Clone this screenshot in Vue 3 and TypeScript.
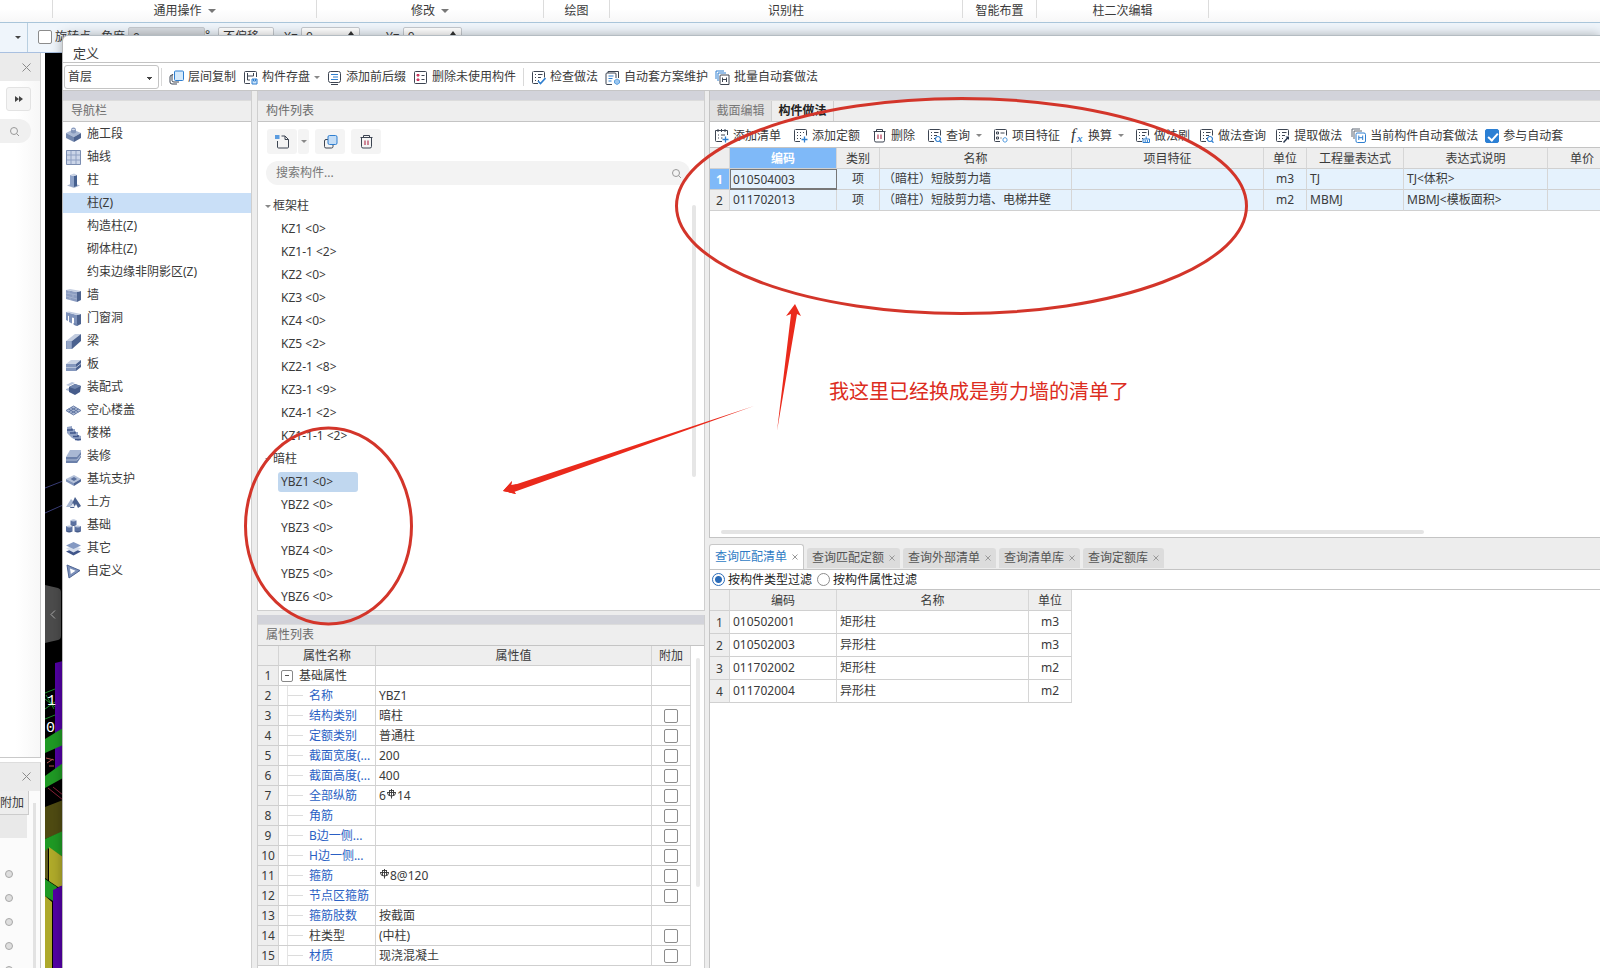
<script setup lang="ts">
import { ref } from 'vue'

interface Shape { d: string; fill?: string; stroke?: string; w?: number }
interface Tool { icon: string; label: string; caret?: boolean }

const INK = '#3d4552'
const BLUE = '#2f7fd0'
const frame = 'M3 1.5h9.5q1 0 1 1v5M7 13.5H2.500q-1 0-1-1V2.500q0-1 1-1'
const lines = 'M4 4.500h1M7 4.500h4.500M4 7.500h1M7 7.500h3M4 10.500h1M7 10.500h1'

const icons: Record<string, Shape[]> = {
  floorCopy: [
    { d: 'M3 5Q1 5 1 7V12Q1 14 3 14H8', stroke: INK },
    { d: 'M4 4Q3 5 3 6V10.500Q3 12 5 12H10', stroke: INK },
    { d: 'M6.500 1h7q1 0 1 1v7.500q0 1-1 1h-7q-1 0-1-1V2q0-1 1-1z', fill: '#d6eafb', stroke: BLUE },
  ],
  save: [
    { d: 'M13.500 7V2.500q0-1-1-1h-10q-1 0-1 1v10q0 1 1 1H7', stroke: INK },
    { d: 'M4.500 3v7M4.500 6h6M10.500 3v3M4.500 10H7', stroke: INK },
    { d: 'M9 9h5v5H9zM10.500 9v2h2V9', fill: '#cfe6fa', stroke: BLUE },
  ],
  prefix: [
    { d: 'M3.500 1.500h8q2 0 2 2v7q0 2-2 2h-8q-2 0-2-2v-7q0-2 2-2zM4 14.500h7', stroke: INK },
    { d: 'M4 4.500h7M6 7h5M4 9.500h7', stroke: BLUE },
  ],
  purge: [
    { d: 'M2.500 1.500h10q1 0 1 1v10q0 1-1 1h-10q-1 0-1-1v-10q0-1 1-1z', stroke: INK },
    { d: 'M4 4.500h2v1.500H4zM4 9h2v1.500H4z', fill: '#e0607a', stroke: '#c8325a' },
    { d: 'M8.500 5.500h3M8.500 9.500h3', stroke: INK },
  ],
  check: [
    { d: frame, stroke: INK }, { d: lines, stroke: INK },
    { d: 'M7 11l2.500 2.500L14.500 8', stroke: BLUE, w: 1.6 },
  ],
  scheme: [
    { d: 'M3 3V1.500h10.500V8M7 14.500H2q-1 0-1-1V4q0-1 1-1h8q1 0 1 1v4', stroke: INK },
    { d: 'M3.500 6h5M3.500 8.500h4M3.500 11h3', stroke: BLUE },
    { d: 'M12 9l2.500 1.500v2.500L12 14.500 9.500 13v-2.500z', fill: '#9cc7ef', stroke: '#5ca0e0' },
  ],
  batch: [
    { d: 'M1 9V1h8M3 11V3h8', stroke: BLUE },
    { d: 'M6 5h8v9.500H6q-1 0-1-1V6q0-1 1-1z', fill: '#fff', stroke: INK },
    { d: 'M7.500 7.500v4.500M11.500 7.500v4.500M7.500 9.500h4', stroke: INK },
  ],
  addList: [
    { d: 'M13.500 7V2.500h-12v10q0 1 1 1H8M4 1v3M7.500 1v3M11 1v3', stroke: INK },
    { d: 'M4 7h1M7 7h4M4 10h1M7 10h1.500', stroke: INK },
    { d: 'M11.500 8.500v6M8.500 11.500h6', stroke: BLUE, w: 1.3 },
  ],
  addQuota: [
    { d: frame, stroke: INK },
    { d: 'M4 4.500h1M7 4.500h1M10 4.500h1M4 7.500h1M7 7.500h1M4 10.500h1M7 10.500h1', stroke: INK },
    { d: 'M11.500 8.500v6M8.500 11.500h6', stroke: BLUE, w: 1.3 },
  ],
  trash: [
    { d: 'M1.500 3.500h12M4.500 3V1.500h6V3M2.500 4v8.500q0 1.500 1.500 1.500h7q1.500 0 1.500-1.500V4', stroke: INK },
    { d: 'M6 6.500v4.500M9 6.500v4.500', stroke: '#b23a56', w: 1.2 },
  ],
  query: [
    { d: frame, stroke: INK }, { d: lines, stroke: INK },
    { d: 'M11 8.500a2.500 2.500 0 1 1-.1 0zM12.800 13l1.700 1.700', stroke: BLUE, w: 1.2 },
  ],
  feature: [
    { d: frame, stroke: INK },
    { d: 'M3.500 4h2v2h-2zM3.500 9h2v2h-2zM7.500 5h4M7.500 10h1', stroke: INK },
    { d: 'M12 9.500l2 1.200v2.300L12 14.300 10 13v-2.300z', stroke: '#5ca0e0' },
  ],
  brush: [
    { d: frame, stroke: INK }, { d: lines, stroke: INK },
    { d: 'M8 14.500V11h6.500v3.500zM11.200 11V8.500M10.200 12v2.500M12.400 12v2.500', stroke: BLUE },
  ],
  extract: [
    { d: frame, stroke: INK }, { d: lines, stroke: INK },
    { d: 'M8.500 14.500L13 9.500', stroke: '#28364e', w: 1.4 },
    { d: 'M10.500 8.500H14V12z', fill: '#28364e' },
  ],
  current: [
    { d: 'M1 9V1h8M3 11V3h8', stroke: '#5c6675' },
    { d: 'M6 5h7q1.500 0 1.500 1.500v6.500q0 1.500-1.500 1.500H6.500Q5 14.500 5 13V6.500Q5 5 6 5z', fill: '#fff', stroke: BLUE },
    { d: 'M7.800 7.500v4.500M11.700 7.500v4.500M7.800 9.700h4', stroke: BLUE },
  ],
  newDoc: [
    { d: 'M6.500 2H10l3.500 3.500V13q0 1-1 1H3.500q-1 0-1-1V7M10 2v3.500h3.500', stroke: INK },
    { d: 'M0 1h4.500v4H0z', fill: '#5c9de0' },
  ],
  copy: [
    { d: 'M5 5.500H3q-1.500 0-1.500 1.500v5.500Q1.500 14 3 14h5.500q1.500 0 1.500-1.500V11', stroke: INK },
    { d: 'M6.500 1.500h6q1.500 0 1.500 1.500v6q0 1.500-1.500 1.500h-6Q5 10.500 5 9V3q0-1.500 1.500-1.500z', fill: '#c4ddf6', stroke: BLUE },
  ],
  stage: [
    { d: 'M0 6L7 2.500 15 6 8 10z', fill: '#a9b8d3' },
    { d: 'M0 6l8 4v5L0 11z', fill: '#7488ae' },
    { d: 'M15 6L8 10v5l7-4z', fill: '#4e6490' },
    { d: 'M5 3.500q0-3 2.500-3t2.500 3v2q-2.500 2-5 0z', fill: '#8496ba' },
    { d: 'M5.500 2.500q2-1.500 4 0-2 1.300-4 0z', fill: '#d6deec' },
  ],
  axis: [
    { d: 'M.5.5h14v14H.5z', fill: '#cbd5e8', stroke: '#7b8db0' },
    { d: 'M5 1v13M10 1v13M1 5h13M1 10h13', stroke: '#8fa0c2' },
  ],
  column: [
    { d: 'M1 12.500l6-2.500 7 2.500-6 2.500z', fill: '#a9b6cf' },
    { d: 'M4 2l4 1v11l-4-1z', fill: '#8fa3c8' },
    { d: 'M8 3l3-1v11l-3 1z', fill: '#46608f' },
    { d: 'M4 2l4-1.500L11 2 8 3z', fill: '#c8d2e4' },
  ],
  wall: [
    { d: 'M0 2l11 2v10L0 11z', fill: '#8b9cc0' },
    { d: 'M11 4l4-1v9l-4 2z', fill: '#4d638f' },
    { d: 'M0 2l4-1 11 2-4 1z', fill: '#c3cde0' },
    { d: 'M0 5l11 2M0 8l11 3M3 2.500v3M7 6v3M4 9v3', stroke: '#a2b1ce' },
  ],
  opening: [
    { d: 'M0 1l11 3v11l-3-1V7L6 6.500v6L3 11V5L2 4.700V10L0 9z', fill: '#7e92ba' },
    { d: 'M11 4l4-1v10l-4 2z', fill: '#4d638f' },
    { d: 'M0 1l3-.5L15 3l-4 1z', fill: '#c3cde0' },
    { d: 'M7.500 12l4 1v2l-4-1.500z', fill: '#6d82ac' },
  ],
  beam: [
    { d: 'M0 7L9 0h6L6 7z', fill: '#c3cde0' },
    { d: 'M0 7h6v8H0z', fill: '#8396bc' },
    { d: 'M6 7l9-7v7l-9 8z', fill: '#4a618f' },
    { d: 'M2 7v8M4 7v8', stroke: '#a9b8d3' },
  ],
  slab: [
    { d: 'M0 7l5-4h10l-5 4z', fill: '#c9d3e4' },
    { d: 'M0 7h10v7H0z', fill: '#8396bc' },
    { d: 'M10 7l5-4v7l-5 4z', fill: '#4a618f' },
    { d: 'M0 10.500h10l5-4', stroke: '#b4c1d9' },
  ],
  precast: [
    { d: 'M0 5l6-3 3 1-6 3z', fill: '#b9c5dc' },
    { d: 'M3 7l6-3 6 2-1 6-5 3-6-3z', fill: '#465c8a' },
    { d: 'M3 7l6-3 6 2-6 3z', fill: '#6f84ad' },
    { d: 'M0 9l3-1v3l-3-1z', fill: '#a9b8d3' },
  ],
  hollow: [
    { d: 'M0 7.500L7.500 3 15 7.500 7.500 12z', fill: '#aebbd4', stroke: '#6d81aa' },
    { d: 'M2.500 6l7.500 4.500M5 4.500l7.500 4.500M12.500 6L5 10.500M10 4.500L2.500 9', stroke: '#5f75a2' },
  ],
  stair: [
    { d: 'M1 1l5-1v3l3 0v3l3 0v3l3 1v4l-3 1-6-3-5-5z', fill: '#93a4c6' },
    { d: 'M1 4l5 0 0-1.500M4 7h5V5.500M7 10.500h5V9M9 13.500h6', stroke: '#40568a', w: 1.6 },
  ],
  finish: [
    { d: 'M4 1h11v7l-4 6H0V8z', fill: '#a9b8d3' },
    { d: 'M0 8h11l4-5v5l-4 6H0z', fill: '#6b80aa' },
    { d: 'M0 11h11l4-5', stroke: '#b4c1d9' },
  ],
  pit: [
    { d: 'M0 7l8-4 7 4-7 4z', fill: '#b4c1d9' },
    { d: 'M0 7l8 4v3L0 9.500z', fill: '#8094bb' },
    { d: 'M15 7l-7 4v3l7-4.500z', fill: '#4f6594' },
    { d: 'M4.500 7L8 5l3 2-3 2z', fill: '#5a709d' },
  ],
  earth: [
    { d: 'M0 12L5 4l3 3-3 5z', fill: '#a9b8d3' },
    { d: 'M4 13l5-11 6 9-3 2-2-4-2 4z', fill: '#4a608e' },
    { d: 'M4 12l3-4 2 4z', fill: '#dfe5f0' },
  ],
  base: [
    { d: 'M4.500 2.500h6v4.500h-6zM0 8h6.500v5.500H0zM8.500 8H15v5.500H8.500z', fill: '#5b71a0' },
    { d: 'M4.500 2.500q3-2.500 6 0-3 2-6 0zM0 8.500q3-2 6.500 0-3 2-6.500 0zM8.500 8.500q3-2 6.500 0-3 2-6.500 0z', fill: '#b9c5dc' },
    { d: 'M0 13q3 3 6.500 0zM8.500 13q3 3 6.500 0zM4.500 7q3 2 6 0z', fill: '#465c8a' },
  ],
  other: [
    { d: 'M0 10.500l7.500-3 7.500 3-7.500 4z', fill: '#40558a' },
    { d: 'M0 7.500l7.500-3 7.500 3-7.500 4z', fill: '#d6deec' },
    { d: 'M0 4.500l7.500-3.500L15 4.500 7.500 8z', fill: '#8499c2' },
  ],
  custom: [
    { d: 'M1 1l13 5.500L3 14z', fill: '#7c90ba', stroke: '#4f6594' },
    { d: 'M4 4.500l5.500 2.300L4.800 10z', fill: '#fff' },
  ],
}

const ribbon = [
  { label: '', w: 53 }, { label: '通用操作', w: 264, caret: true }, { label: '修改', w: 227, caret: true },
  { label: '绘图', w: 66 }, { label: '识别柱', w: 353 }, { label: '智能布置', w: 74 }, { label: '柱二次编辑', w: 172 },
]

const mainTools: Tool[][] = [
  [
    { icon: 'floorCopy', label: '层间复制' }, { icon: 'save', label: '构件存盘', caret: true },
    { icon: 'prefix', label: '添加前后缀' }, { icon: 'purge', label: '删除未使用构件' },
  ],
  [
    { icon: 'check', label: '检查做法' }, { icon: 'scheme', label: '自动套方案维护' }, { icon: 'batch', label: '批量自动套做法' },
  ],
]

const recipeTools: Tool[][] = [
  [
    { icon: 'addList', label: '添加清单' }, { icon: 'addQuota', label: '添加定额' },
    { icon: 'trash', label: '删除' }, { icon: 'query', label: '查询', caret: true },
  ],
  [
    { icon: 'feature', label: '项目特征' }, { icon: 'fx', label: '换算', caret: true }, { icon: 'brush', label: '做法刷' },
    { icon: 'query', label: '做法查询' }, { icon: 'extract', label: '提取做法' }, { icon: 'current', label: '当前构件自动套做法' },
  ],
]

const nav = [
  { icon: 'stage', label: '施工段' }, { icon: 'axis', label: '轴线' }, { icon: 'column', label: '柱' },
  { label: '柱(Z)' }, { label: '构造柱(Z)' }, { label: '砌体柱(Z)' }, { label: '约束边缘非阴影区(Z)' },
  { icon: 'wall', label: '墙' }, { icon: 'opening', label: '门窗洞' }, { icon: 'beam', label: '梁' },
  { icon: 'slab', label: '板' }, { icon: 'precast', label: '装配式' }, { icon: 'hollow', label: '空心楼盖' },
  { icon: 'stair', label: '楼梯' }, { icon: 'finish', label: '装修' }, { icon: 'pit', label: '基坑支护' },
  { icon: 'earth', label: '土方' }, { icon: 'base', label: '基础' }, { icon: 'other', label: '其它' },
  { icon: 'custom', label: '自定义' },
]
const activeNav = ref('柱(Z)')

const groups = [
  { name: '框架柱', items: ['KZ1 <0>', 'KZ1-1 <2>', 'KZ2 <0>', 'KZ3 <0>', 'KZ4 <0>', 'KZ5 <2>', 'KZ2-1 <8>', 'KZ3-1 <9>', 'KZ4-1 <2>', 'KZ1-1-1 <2>'] },
  { name: '暗柱', items: ['YBZ1 <0>', 'YBZ2 <0>', 'YBZ3 <0>', 'YBZ4 <0>', 'YBZ5 <0>', 'YBZ6 <0>'] },
]
const activeItem = ref('YBZ1 <0>')
const keyword = ref('')

interface Prop { name: string; pre?: string; bar?: boolean; value?: string; box?: boolean; plain?: boolean; root?: boolean }
const props: Prop[] = [
  { name: '基础属性', root: true, plain: true },
  { name: '名称', value: 'YBZ1' },
  { name: '结构类别', value: '暗柱', box: true },
  { name: '定额类别', value: '普通柱', box: true },
  { name: '截面宽度(...', value: '200', box: true },
  { name: '截面高度(...', value: '400', box: true },
  { name: '全部纵筋', pre: '6', bar: true, value: '14', box: true },
  { name: '角筋', box: true },
  { name: 'B边一侧...', box: true },
  { name: 'H边一侧...', box: true },
  { name: '箍筋', bar: true, value: '8@120', box: true },
  { name: '节点区箍筋', box: true },
  { name: '箍筋肢数', value: '按截面' },
  { name: '柱类型', value: '(中柱)', box: true, plain: true },
  { name: '材质', value: '现浇混凝土', box: true },
]

const recipe = [
  { code: '010504003', kind: '项', name: '（暗柱）短肢剪力墙', unit: 'm3', expr: 'TJ', desc: 'TJ<体积>' },
  { code: '011702013', kind: '项', name: '（暗柱）短肢剪力墙、电梯井壁', unit: 'm2', expr: 'MBMJ', desc: 'MBMJ<模板面积>' },
]

const queryTabs = ['查询匹配清单', '查询匹配定额', '查询外部清单', '查询清单库', '查询定额库']
const activeTab = ref('查询匹配清单')
const filter = ref('type')
const autoJoin = ref(true)
const matches = [
  { code: '010502001', name: '矩形柱', unit: 'm3' },
  { code: '010502003', name: '异形柱', unit: 'm3' },
  { code: '011702002', name: '矩形柱', unit: 'm2' },
  { code: '011702004', name: '异形柱', unit: 'm2' },
]
</script>

<template>
  <div class="app">
    <div class="ribbon">
      <div v-for="g in ribbon" :key="g.label" class="ribbon-group" :style="{ width: g.w + 'px' }">
        <span>{{ g.label }}</span><i v-if="g.caret" class="caret big"></i>
      </div>
    </div>
    <div class="options">
      <div class="opt-left"><i class="caret dark"></i></div>
      <label class="opt-check"><input type="checkbox" class="box" />旋转点</label>
      <label class="opt">角度<input class="field grey" value="0" /></label>
      <span class="deg">°</span>
      <select class="field pick" aria-label="偏移方式"><option>不偏移</option></select>
      <label class="opt x">X=<span class="spin"><input value="0" /><i></i></span></label>
      <label class="opt y">Y=<span class="spin"><input value="0" /><i></i></span></label>
    </div>
    <div class="desk">
      <aside class="side">
        <div class="side-top">
          <div class="side-head"><button class="x-btn" aria-label="关闭"><svg width="9" height="9" viewBox="0 0 9 9"><path d="M.5.5l8 8M8.500.5l-8 8" stroke="#8b8b8b" /></svg></button></div>
          <button class="expand" aria-label="展开"><svg width="8" height="6" viewBox="0 0 8 6"><path d="M0 0l4 3-4 3zM4 0l4 3-4 3z" fill="#444" /></svg></button>
          <div class="side-search"><svg width="11" height="11" viewBox="0 0 11 11"><circle cx="5" cy="5" r="3.500" fill="none" stroke="#999" /><path d="M7.500 7.500L10 10" stroke="#999" /></svg></div>
        </div>
        <div class="side-bottom">
          <div class="side-head"><button class="x-btn" aria-label="关闭"><svg width="9" height="9" viewBox="0 0 9 9"><path d="M.5.5l8 8M8.500.5l-8 8" stroke="#8b8b8b" /></svg></button></div>
          <div class="side-body">
            <div class="side-col">
              <div class="side-th">附加</div>
              <div class="side-sub"></div>
              <div class="dots"><i v-for="n in 5" :key="n"></i></div>
            </div>
            <div class="side-scroll"></div>
          </div>
        </div>
      </aside>
      <div class="canvas">
        <svg width="18" height="916" viewBox="44 52 18 916">
          <path d="M44 487l18-7M44 512l18-8" stroke="#3b3f7a" />
          <path d="M44 584l13 3q3 1 3 4v44q0 3-3 4l-13 3z" fill="#4c4c4c" />
          <path d="M54 609.500l-4 4 4 4" fill="none" stroke="#aaa" />
          <path d="M54 662l8-2v108h-8z" fill="#5200a4" />
          <path d="M44 692l10-4M44 698l10 8M44 708l10-7M45 694l8 14M44 718l10-4" stroke="#1d8a2a" />
          <text x="46" y="704" class="cad">1</text>
          <text x="45" y="731" class="cad">0</text>
          <path d="M44 738l18-11v17l-18 8z" fill="#1f9a24" />
          <path d="M45 757l8 2M46 762l6-4M48 765h5" stroke="#b3544f" />
          <path d="M44 775l18-13v15l-18 10z" fill="#1f9a24" />
          <path d="M47 787l15 12M52 786l10 8" stroke="#8a2238" />
          <path d="M44 806l18-7v32l-18 7z" fill="#4f4b12" />
          <path d="M44 838l18-8v26l-14-9-4 4z" fill="#1f9a24" />
          <path d="M48 846l14 10v29l-5 1-9-6z" fill="#b0ab2a" />
          <path d="M44 850l3-3v32l-3-2z" fill="#5d5a1a" />
          <path d="M44 878l12 8-4 14-8-5z" fill="#1f9a24" />
          <path d="M44 895l7 6v67h-7z" fill="#aea92c" />
          <path d="M52 889l10-5v84H52z" fill="#5200a4" />
        </svg>
      </div>
    </div>

    <section class="dialog">
      <h1 class="title">定义</h1>
      <div class="toolbar">
        <select class="floor" aria-label="楼层"><option>首层</option></select>
        <template v-for="(set, si) in mainTools" :key="si">
          <i class="sep"></i>
          <button v-for="t in set" :key="t.label" class="tool">
            <svg width="15" height="15" viewBox="0 0 15 15"><path v-for="(s, i) in icons[t.icon]" :key="i" :d="s.d" :fill="s.fill || 'none'" :stroke="s.stroke || 'none'" :stroke-width="s.w || 1" /></svg>
            <span>{{ t.label }}</span><i v-if="t.caret" class="caret"></i>
          </button>
        </template>
      </div>

      <div class="work">
        <div class="pane nav">
          <div class="strip"></div>
          <h2 class="head">导航栏</h2>
          <ul class="nav-list">
            <li v-for="n in nav" :key="n.label">
              <button class="nav-row" :class="{ on: n.label === activeNav }" @click="activeNav = n.label">
                <svg v-if="n.icon" width="15" height="15" viewBox="0 0 15 15"><path v-for="(s, i) in icons[n.icon]" :key="i" :d="s.d" :fill="s.fill || 'none'" :stroke="s.stroke || 'none'" :stroke-width="s.w || 1" /></svg>
                <i v-else class="blank"></i>{{ n.label }}
              </button>
            </li>
          </ul>
        </div>

        <div class="middle">
          <div class="pane list-pane">
            <div class="strip"></div>
            <h2 class="head">构件列表</h2>
            <div class="list-tools">
              <button class="sq" aria-label="新建"><svg width="15" height="15" viewBox="0 0 15 15"><path v-for="(s, i) in icons.newDoc" :key="i" :d="s.d" :fill="s.fill || 'none'" :stroke="s.stroke || 'none'" /></svg></button>
              <button class="sq slim" aria-label="新建选项"><i class="caret"></i></button>
              <button class="sq" aria-label="复制"><svg width="15" height="15" viewBox="0 0 15 15"><path v-for="(s, i) in icons.copy" :key="i" :d="s.d" :fill="s.fill || 'none'" :stroke="s.stroke || 'none'" /></svg></button>
              <button class="sq" aria-label="删除"><svg width="15" height="15" viewBox="0 0 15 15"><path v-for="(s, i) in icons.trash" :key="i" :d="s.d" :fill="s.fill || 'none'" :stroke="s.stroke || 'none'" :stroke-width="s.w || 1" /></svg></button>
            </div>
            <div class="search">
              <input v-model="keyword" placeholder="搜索构件..." aria-label="搜索构件" />
              <svg width="11" height="11" viewBox="0 0 11 11"><circle cx="5" cy="5" r="3.500" fill="none" stroke="#999" /><path d="M7.500 7.500L10 10" stroke="#999" /></svg>
            </div>
            <div class="tree-wrap">
              <div class="tree">
                <template v-for="g in groups" :key="g.name">
                  <div class="group"><i class="caret"></i>{{ g.name }}</div>
                  <button v-for="it in g.items" :key="it" class="leaf" :class="{ on: it === activeItem }" @click="activeItem = it">{{ it }}</button>
                </template>
              </div>
              <div class="tree-scroll"></div>
            </div>
          </div>
          <div class="pane prop-pane">
            <div class="strip"></div>
            <h2 class="head">属性列表</h2>
            <div class="prop-body">
              <table class="props">
                <colgroup><col class="c-no" /><col class="c-name" /><col /><col class="c-box" /></colgroup>
                <thead><tr><th></th><th>属性名称</th><th>属性值</th><th>附加</th></tr></thead>
                <tbody>
                  <tr v-for="(p, i) in props" :key="p.name">
                    <th scope="row">{{ i + 1 }}</th>
                    <td class="p-name" :class="{ plain: p.plain, root: p.root }">
                      <div><button v-if="p.root" class="minus" aria-label="折叠"></button><i v-else class="branch"></i>{{ p.name }}</div>
                    </td>
                    <td class="p-val">{{ p.pre }}<svg v-if="p.bar" class="rebar" width="11" height="10" viewBox="0 0 11 10"><path d="M3.500 1v5.500M7.500 1v5.500M5.500 0v9.500M1 3.500h9M1.500 4q0 3 4 3t4-3M3.500 1.500h4" fill="none" stroke="#333" stroke-width=".9" /></svg>{{ p.value }}</td>
                    <td class="p-box"><input v-if="p.box" type="checkbox" class="box" :aria-label="p.name + '附加'" /></td>
                  </tr>
                </tbody>
              </table>
              <div class="prop-scroll"></div>
            </div>
          </div>
        </div>

        <div class="right">
          <div class="pane recipe-pane">
            <div class="strip"></div>
            <div class="head tabs">
              <button class="tab">截面编辑</button><button class="tab on">构件做法</button>
            </div>
            <div class="recipe-tools">
              <div v-for="(set, si) in recipeTools" :key="si" class="tool-set">
                <button v-for="t in set" :key="t.label" class="tool">
                  <svg v-if="t.icon === 'fx'" width="15" height="15" viewBox="0 0 15 15"><text x="2" y="12" class="fx">f</text><text x="8" y="14" class="fx sub">x</text></svg>
                  <svg v-else width="15" height="15" viewBox="0 0 15 15"><path v-for="(s, i) in icons[t.icon]" :key="i" :d="s.d" :fill="s.fill || 'none'" :stroke="s.stroke || 'none'" :stroke-width="s.w || 1" /></svg>
                  <span>{{ t.label }}</span><i v-if="t.caret" class="caret"></i>
                </button>
              </div>
              <label class="join"><input v-model="autoJoin" type="checkbox" class="box" />参与自动套</label>
            </div>
            <div class="grid-wrap">
              <table class="grid recipe">
                <colgroup><col class="r-no" /><col class="r-code" /><col class="r-kind" /><col class="r-name" /><col class="r-name" /><col class="r-kind" /><col class="r-expr" /><col class="r-desc" /><col class="r-price" /></colgroup>
                <thead><tr><th></th><th class="hot">编码</th><th>类别</th><th>名称</th><th>项目特征</th><th>单位</th><th>工程量表达式</th><th>表达式说明</th><th>单价</th></tr></thead>
                <tbody>
                  <tr v-for="(r, i) in recipe" :key="r.code">
                    <th scope="row" :class="{ hot: i === 0 }">{{ i + 1 }}</th>
                    <td :class="{ focus: i === 0 }">{{ r.code }}</td><td class="mid">{{ r.kind }}</td><td>{{ r.name }}</td><td></td>
                    <td class="mid">{{ r.unit }}</td><td>{{ r.expr }}</td><td>{{ r.desc }}</td><td></td>
                  </tr>
                </tbody>
              </table>
            </div>
            <div class="h-scroll"></div>
          </div>

          <div class="query-pane">
            <div class="q-tabs">
              <div v-for="t in queryTabs" :key="t" class="q-tab" :class="{ on: t === activeTab }">
                <button @click="activeTab = t">{{ t }}</button>
                <button :aria-label="'关闭' + t"><svg width="6" height="6" viewBox="0 0 6 6"><path d="M.5.5l5 5M5.500.5l-5 5" stroke="#999" /></svg></button>
              </div>
            </div>
            <div class="filters">
              <label><input v-model="filter" type="radio" name="filter" value="type" />按构件类型过滤</label>
              <label><input v-model="filter" type="radio" name="filter" value="prop" />按构件属性过滤</label>
            </div>
            <div class="match-wrap">
              <table class="grid match">
                <colgroup><col class="r-no" /><col class="r-code" /><col class="r-name" /><col class="r-kind" /></colgroup>
                <thead><tr><th></th><th>编码</th><th>名称</th><th>单位</th></tr></thead>
                <tbody>
                  <tr v-for="(m, i) in matches" :key="m.code">
                    <th scope="row">{{ i + 1 }}</th><td>{{ m.code }}</td><td>{{ m.name }}</td><td class="mid">{{ m.unit }}</td>
                  </tr>
                </tbody>
              </table>
            </div>
          </div>
        </div>
      </div>
    </section>

    <svg class="marks" width="1260" height="640" viewBox="0 0 1260 640">
      <g fill="none" stroke="#d3352a" stroke-width="3">
        <ellipse cx="961.500" cy="206" rx="285" ry="107.500" />
        <ellipse cx="328.500" cy="526" rx="83" ry="98" />
      </g>
      <g fill="#ea2a1c">
        <path d="M503 491l9-10-1 5L754 406 514 492l2 2z" />
        <path d="M503 491l9-10-1 4 6-1-3 7 2 3z" />
        <path d="M795 304l6 12-4-2-20 117 14-117-5 2z" />
      </g>
    </svg>
    <p class="note">我这里已经换成是剪力墙的清单了</p>
  </div>
</template>

<style>
body { margin: 0; overflow: hidden; }
</style>

<style scoped>
* { box-sizing: border-box; }
.app { position: relative; display: flex; flex-direction: column; height: 100vh; overflow: hidden; background: #fff; color: #3a3a3a; font: 12px/16px "Noto Sans", "Noto Sans CJK SC", sans-serif; }
button, input, select { font: inherit; color: inherit; margin: 0; padding: 0; border: 0; background: none; outline: none; }
button { display: flex; align-items: center; white-space: nowrap; }
h1, h2, p, ul { margin: 0; padding: 0; font-weight: 400; list-style: none; }
svg { flex: none; display: block; }
.caret { flex: none; width: 0; height: 0; border: 3px solid transparent; border-top: 3px solid #888; border-bottom: 0; }
.caret.big { border-width: 4px 4px 0; border-top-color: #777; }
.caret.dark { border-top-color: #444; }
.box { appearance: none; flex: none; width: 14px; height: 14px; border: 1px solid #8c8c8c; border-radius: 2px; background: #fff; }

.ribbon { display: flex; flex: none; height: 23px; border-bottom: 1px solid #a9c5da; background: linear-gradient(#fff 40%, #f7f7f8); }
.ribbon-group { display: flex; flex: none; justify-content: center; align-items: center; gap: 6px; height: 18px; padding-top: 4px; border-right: 1px solid #dcdcdc; }
.options { display: flex; flex: none; align-items: flex-start; height: 30px; padding-top: 4px; border-bottom: 1px solid #a9c0e0; background: #eff5fb; }
.opt-left { display: flex; align-items: center; justify-content: flex-end; width: 28px; height: 29px; margin-top: -4px; padding-right: 6px; border-right: 1px solid #b9cfe0; }
.opt-check { display: flex; align-items: center; gap: 3px; margin-left: 10px; padding-top: 2px; }
.opt { display: flex; align-items: center; gap: 3px; margin-left: 10px; height: 20px; }
.field { width: 77px; height: 20px; padding-left: 4px; border: 1px solid #c5c9ce; border-radius: 2px; background: #fff; }
.field.grey { background: #d7dbe0; }
.deg { width: 13px; }
.pick { appearance: none; width: 56px; }
.opt.x { width: 76px; }
.opt.y { margin-left: 26px; }
.spin { display: flex; align-items: center; width: 59px; height: 20px; padding: 0 4px; border: 1px solid #c5c9ce; border-radius: 2px; background: #fff; }
.spin input { width: 42px; }
.spin i { border: 3px solid transparent; border-top: 0; border-bottom: 4px solid #333; margin-bottom: 8px; }

.desk { display: flex; flex: 1; min-height: 0; }
.side { display: flex; flex-direction: column; flex: none; width: 41px; gap: 4px; }
.side-top { flex: none; height: 77%; border-right: 1px solid #c9c9c9; border-bottom: 1px solid #c9c9c9; background: linear-gradient(90deg, #fff 40%, #f7f7f7); }
.side-bottom { flex: 1; min-height: 0; overflow: hidden; border-right: 1px solid #c9c9c9; border-top: 1px solid #ddd; background: #fbfbfb; }
.side-head { display: flex; align-items: center; justify-content: flex-end; height: 28px; padding-right: 9px; background: #ebebeb; }
.expand { justify-content: center; width: 25px; height: 24px; margin: 6px 0 0 6px; border: 1px solid #e3e3e3; border-radius: 3px; background: #f5f5f5; }
.side-search { display: flex; align-items: center; justify-content: flex-end; width: 31px; height: 24px; margin-top: 8px; padding-right: 11px; border-radius: 0 12px 12px 0; background: #f0f0f0; }
.side-body { display: flex; height: 100%; gap: 4px; }
.side-col { width: 29px; }
.side-th { display: flex; justify-content: flex-end; height: 24px; padding: 4px 4px 0 0; border-right: 1px solid #ccc; border-bottom: 1px solid #ccc; background: #ededed; white-space: nowrap; }
.side-sub { width: 27px; height: 23px; background: #e9e9e9; }
.dots { display: flex; flex-direction: column; gap: 16px; padding: 32px 0 0 5px; }
.dots i { flex: none; width: 8px; height: 8px; border: 1px solid #a8a8a8; border-radius: 50%; background: #dedede; }
.side-scroll { width: 3px; margin-top: 12px; background: #e2e2e2; }
.canvas { flex: 1; margin-left: 4px; background: #000; }
.cad { font: 15px "Liberation Mono", monospace; fill: #fff; }

.dialog { position: absolute; inset: 35px 0 0 62px; display: flex; flex-direction: column; border-left: 1px solid #b9b9b9; border-top: 1px solid #b4bcc2; border-top-left-radius: 6px; background: #fff; box-shadow: 0 0 12px rgba(0, 0, 0, .3); overflow: hidden; }
.title { flex: none; height: 27px; padding: 8px 10px 0; font-size: 13px; line-height: 18px; border-bottom: 1px solid #c3c3c3; }
.toolbar { display: flex; flex: none; align-items: center; gap: 7px; height: 28px; padding-top: 1px; border-bottom: 1px solid #c6c6c6; }
.floor { appearance: none; width: 95px; height: 24px; margin: 0 -5px 0 1px; padding-left: 3px; border: 1px solid #c4c4c4; border-radius: 3px; background: linear-gradient(#444, #444) calc(100% - 6px) 50% / 5px 1px no-repeat, linear-gradient(#444, #444) calc(100% - 7px) calc(50% + 1px) / 3px 1px no-repeat, linear-gradient(#444, #444) calc(100% - 8px) calc(50% + 2px) / 1px 1px no-repeat; }
.sep { flex: none; width: 1px; height: 18px; background: #d9d9d9; }
.tool { flex: none; gap: 4px; }
.recipe-tools .caret { margin: 0 2px; }

.work { display: grid; flex: 1; grid-template-columns: 189px 448px minmax(0, 1fr); column-gap: 5px; min-height: 0; background: #ededed; }
.pane { display: flex; flex-direction: column; background: #fff; }
.strip { flex: none; height: 9px; background: #d2d3da; }
.head { flex: none; height: 22px; padding: 1px 8px 0; font-size: 12px; line-height: 18px; color: #6b6b6b; border-top: 1px solid #dcdcdc; border-bottom: 1px solid #c4c4c4; background: #eee; }
.nav { border-right: 1px solid #cfcfcf; }
.nav-list { display: flex; flex-direction: column; gap: 3px; padding-top: 2px; }
.nav-row { width: 100%; height: 20px; padding-left: 3px; gap: 6px; }
.nav-row.on { background: #c9dff7; }
.blank { width: 15px; }

.middle { display: flex; flex-direction: column; gap: 4px; min-height: 0; }
.list-pane { flex: none; border: 1px solid #cfcfcf; border-top: 0; }
.list-tools { display: flex; gap: 6px; padding: 7px 0 0 9px; }
.sq { justify-content: center; width: 30px; height: 25px; border-radius: 3px; background: #f4f4f4; }
.sq.slim { width: 12px; margin-left: -6px; border-left: 1px solid #fff; }
.search { display: flex; align-items: center; height: 24px; margin: 7px 14px 0 8px; padding: 0 8px 0 10px; border-radius: 12px; background: #f3f3f3; }
.search input { flex: 1; min-width: 0; }
.search input::placeholder { color: #777; opacity: 1; }
.tree-wrap { display: flex; padding: 11px 8px 3px 7px; }
.tree { display: flex; flex: 1; flex-direction: column; align-items: flex-start; gap: 3px; }
.group { display: flex; align-items: center; gap: 2px; height: 20px; }
.leaf { min-width: 80px; height: 20px; margin-left: 13px; padding-left: 3px; border-radius: 3px; }
.leaf.on { background: #c0d7ef; }
.tree-scroll { width: 4px; height: 272px; margin-top: 9px; border-radius: 2px; background: #e6e6e6; }

.prop-pane { flex: 1; min-height: 0; overflow: hidden; border: 1px solid #cfcfcf; border-width: 0 1px; }
.prop-body { display: flex; gap: 5px; }
.props { flex: 1; table-layout: fixed; border-collapse: separate; border-spacing: 0; }
.c-no { width: 21px; }
.c-name { width: 97px; }
.c-box { width: 39px; }
.props th, .props td { height: 20px; padding: 0; line-height: 18px; font-weight: 400; white-space: nowrap; overflow: hidden; border-right: 1px solid #d4d4d4; border-bottom: 1px solid #cfcfcf; }
.props th { background: #eee; text-align: center; }
.p-name div { display: flex; align-items: center; height: 19px; padding-left: 8px; color: #2a5fc4; }
.p-name.plain div { color: #3a3a3a; }
.p-name.root div { padding-left: 2px; gap: 6px; }
.branch { position: relative; flex: none; width: 22px; height: 19px; border-left: 1px solid #e4e4e4; }
.branch::after { content: ""; position: absolute; left: 0; top: 9px; width: 15px; height: 1px; background: #dcdcdc; }
.minus { justify-content: center; width: 12px; height: 12px; border: 1px solid #888; border-radius: 2px; }
.minus::after { content: ""; width: 4px; height: 1px; background: #555; }
.props .p-val { padding-left: 3px; }
.rebar { display: inline-block; vertical-align: 1px; }
.p-box { text-align: center; }
.p-box .box { display: block; margin: 0 auto; }
.prop-scroll { flex: none; width: 4px; height: 229px; margin: 12px 4px 0 0; border-radius: 2px; background: #e8e8e8; }

.right { display: flex; flex-direction: column; min-width: 0; min-height: 0; margin-left: -1px; }
.recipe-pane { flex: 0 0 51%; border-left: 1px solid #c4c4c4; border-bottom: 1px solid #c4c4c4; }
.tabs { display: flex; padding: 0; }
.tab { justify-content: center; width: 62px; border-right: 1px solid #d0d0d0; background: #e2e2e2; color: #777; }
.tab.on { background: #eee; color: #222; font-weight: 700; }
.recipe-tools { display: flex; flex: none; align-items: center; gap: 9px; height: 26px; padding: 2px 0 0 4px; border-bottom: 1px solid #c4c4c4; }
.tool-set { display: flex; gap: 12px; }
.tool-set + .tool-set { gap: 9px; }
.fx { font: italic 16px "Liberation Serif", serif; fill: #333; }
.fx.sub { font: italic bold 11px "Liberation Serif", serif; fill: #2f7fd0; }
.join { display: flex; flex: none; align-items: center; gap: 4px; margin-left: -2px; white-space: nowrap; }
.join .box:checked { border-color: #2b7fd4; background: #2b7fd4; position: relative; }
.join .box:checked::after { content: ""; position: absolute; left: 4px; top: 1px; width: 4px; height: 8px; border: solid #fff; border-width: 0 2px 2px 0; transform: rotate(42deg); }

.grid-wrap { flex: 1; min-height: 0; overflow: hidden; }
.grid { table-layout: fixed; border-collapse: separate; border-spacing: 0; }
.recipe { width: 907px; }
.match { width: 362px; }
.r-no { width: 20px; }
.r-code { width: 107px; }
.r-kind { width: 43px; }
.r-name { width: 192px; }
.r-expr { width: 97px; }
.r-desc { width: 144px; }
.r-price { width: 69px; }
.grid th, .grid td { height: 21px; padding: 0 0 0 3px; line-height: 18px; font-weight: 400; text-align: left; white-space: nowrap; overflow: hidden; border-right: 1px solid #d6d6d6; border-bottom: 1px solid #d0d0d0; }
.grid th { padding: 1px 0 0; background: #eee; text-align: center; }
.grid .mid { padding: 0; text-align: center; }
.recipe td { background: #e5f2fd; }
.grid th.hot { background: #7fb9f8; color: #fff; font-weight: 700; }
.recipe td.focus { border: 1px solid #777; border-width: 1px 1px 2px 1px; padding-left: 2px; line-height: 17px; }
.h-scroll { flex: none; width: 79%; height: 4px; margin: 0 0 3px 11px; border-radius: 2px; background: #e4e4e4; }

.query-pane { display: flex; flex: 1; flex-direction: column; min-height: 0; margin-top: 6px; }
.q-tabs { display: flex; align-items: flex-end; gap: 3px; height: 25px; }
.q-tab { display: flex; align-items: center; gap: 5px; height: 20px; margin-bottom: 1px; padding: 0 5px; border-radius: 3px 3px 0 0; background: #dcdcdc; color: #555; }
.q-tab.on { height: 25px; margin-bottom: 0; border: 1px solid #c8c8c8; border-bottom: 0; background: #fff; color: #2f7cc4; }
.filters { display: flex; align-items: center; gap: 5px; height: 21px; padding-left: 2px; border: 1px solid #c4c4c4; border-right: 0; background: #fff; color: #222; }
.filters label { display: flex; align-items: center; gap: 3px; }
.filters input { appearance: none; width: 13px; height: 13px; border: 1px solid #8c8c8c; border-radius: 50%; background: #fff; }
.filters input:checked { border-color: #2b6cb8; background: radial-gradient(circle, #2b6cb8 3px, #fff 4px); }
.match-wrap { flex: 1; min-height: 0; overflow: hidden; border-left: 1px solid #c4c4c4; background: #fff; }
.match tbody th, .match tbody td { height: 23px; }

.marks { position: absolute; left: 0; top: 0; pointer-events: none; }
.note { position: absolute; left: 829px; top: 378px; font-size: 20px; line-height: 28px; color: #dc2c20; white-space: nowrap; }
</style>
